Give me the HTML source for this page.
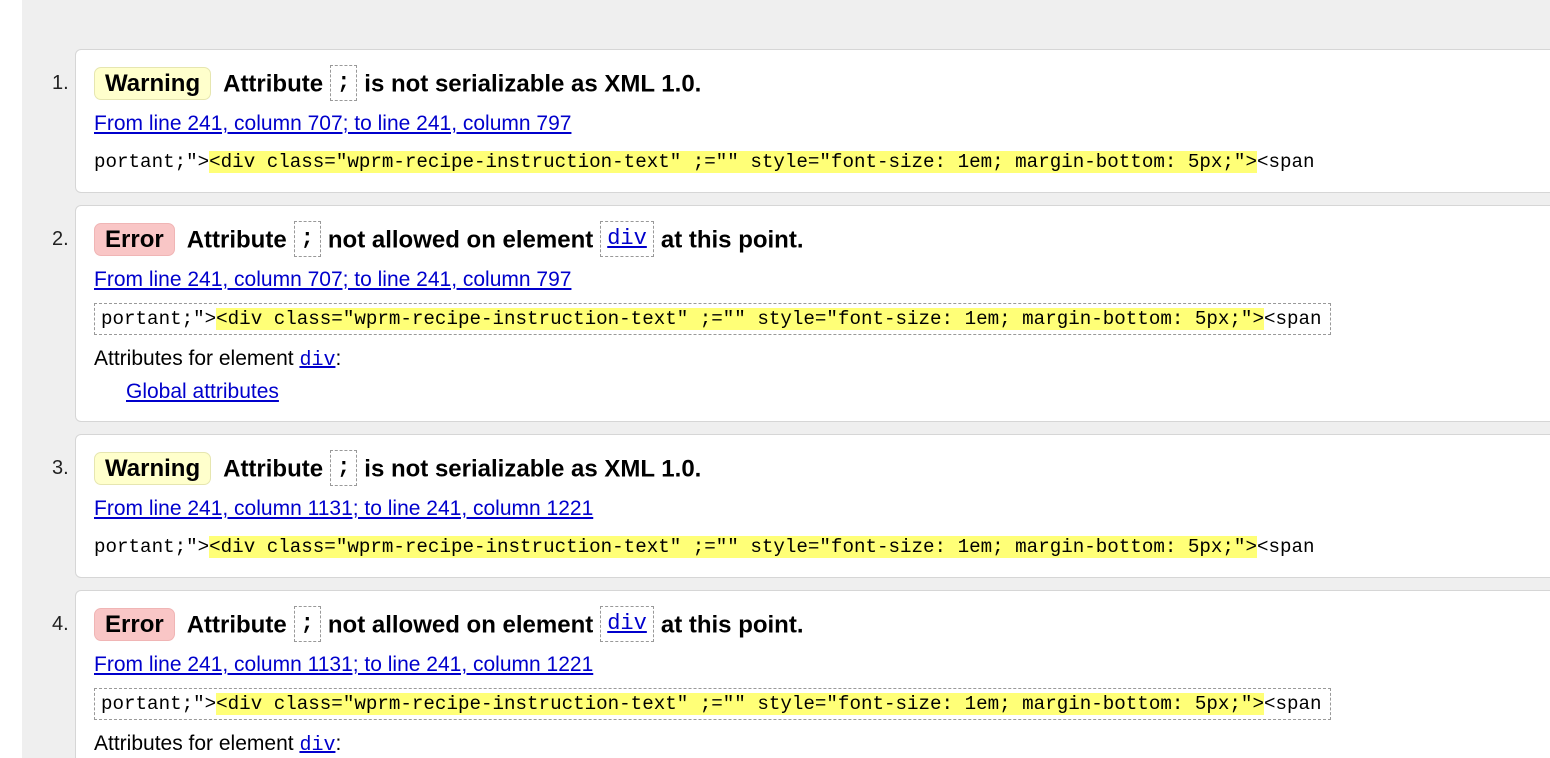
<!DOCTYPE html>
<html style="overflow:hidden;height:758px"><head><meta charset="utf-8"><style>
body{margin:0;width:1550px;height:758px;overflow:hidden;background:#fff;font-family:"Liberation Sans",Arial,sans-serif;position:relative}
.bg{position:absolute;left:22px;top:0;width:1528px;height:758px;background:#efefef}
.card{position:absolute;left:75px;width:1500px;background:#fff;border:1px solid #d6d6d6;border-radius:6px;box-sizing:border-box;overflow:hidden}
.num{position:absolute;left:52px;font-size:20px;color:#222}
.ab{position:absolute;left:18px;white-space:nowrap}
.h{font-weight:bold;font-size:24px;color:#000;line-height:32px}
.badge{display:inline-block;padding:0 10px;border-radius:7px;height:31px;line-height:31px;margin-right:12px}
.warn{background:#ffffcc;border:1px solid #e6e6b0}
.err{background:#f9c6c6;border:1px solid #f0b5b5}
.c{display:inline-block;border:1px dashed #999;padding:0 6px;line-height:34px;height:34px;font-family:"Liberation Mono",monospace;font-size:22px;margin:0 7px;vertical-align:middle;position:relative;top:-2px;font-weight:normal}
.c.semi{font-weight:bold}
a{color:#0000cc;text-decoration:underline}
.l{font-size:21px}
.code{font-family:"Liberation Mono",monospace;font-size:19.2px;color:#000;line-height:30px}
.hl{background:#ffff77}
.box{border:1px dashed #999;padding:0 8px 0 6px;display:inline-block}
.t{font-size:21px;color:#000}
</style></head><body>
<div class="bg"></div>

<div class="num" style="top:72px">1.</div>
<div class="card" style="top:49px;height:144px">
 <div class="ab h" style="top:17px"><span class="badge warn">Warning</span>Attribute<span class="c semi">;</span>is not serializable as XML 1.0.</div>
 <div class="ab l" style="top:62px"><a>From line 241, column 707; to line 241, column 797</a></div>
 <div class="ab code" style="top:97px">portant;"&gt;<span class="hl">&lt;div class="wprm-recipe-instruction-text" ;="" style="font-size: 1em; margin-bottom: 5px;"&gt;</span>&lt;span</div>
</div>

<div class="num" style="top:228px">2.</div>
<div class="card" style="top:205px;height:217px">
 <div class="ab h" style="top:17px"><span class="badge err">Error</span>Attribute<span class="c semi">;</span>not allowed on element<span class="c"><a>div</a></span>at this point.</div>
 <div class="ab l" style="top:62px"><a>From line 241, column 707; to line 241, column 797</a></div>
 <div class="ab code box" style="top:97px">portant;"&gt;<span class="hl">&lt;div class="wprm-recipe-instruction-text" ;="" style="font-size: 1em; margin-bottom: 5px;"&gt;</span>&lt;span</div>
 <div class="ab t" style="top:141px">Attributes for element <a style="font-family:'Liberation Mono',monospace;font-size:20px">div</a>:</div>
 <div class="ab l" style="top:174px;left:50px"><a>Global attributes</a></div>
</div>

<div class="num" style="top:457px">3.</div>
<div class="card" style="top:434px;height:144px">
 <div class="ab h" style="top:17px"><span class="badge warn">Warning</span>Attribute<span class="c semi">;</span>is not serializable as XML 1.0.</div>
 <div class="ab l" style="top:62px"><a>From line 241, column 1131; to line 241, column 1221</a></div>
 <div class="ab code" style="top:97px">portant;"&gt;<span class="hl">&lt;div class="wprm-recipe-instruction-text" ;="" style="font-size: 1em; margin-bottom: 5px;"&gt;</span>&lt;span</div>
</div>

<div class="num" style="top:613px">4.</div>
<div class="card" style="top:590px;height:168px;border-bottom:none;border-radius:6px 6px 0 0">
 <div class="ab h" style="top:17px"><span class="badge err">Error</span>Attribute<span class="c semi">;</span>not allowed on element<span class="c"><a>div</a></span>at this point.</div>
 <div class="ab l" style="top:62px"><a>From line 241, column 1131; to line 241, column 1221</a></div>
 <div class="ab code box" style="top:97px">portant;"&gt;<span class="hl">&lt;div class="wprm-recipe-instruction-text" ;="" style="font-size: 1em; margin-bottom: 5px;"&gt;</span>&lt;span</div>
 <div class="ab t" style="top:141px">Attributes for element <a style="font-family:'Liberation Mono',monospace;font-size:20px">div</a>:</div>
</div>
</body></html>
